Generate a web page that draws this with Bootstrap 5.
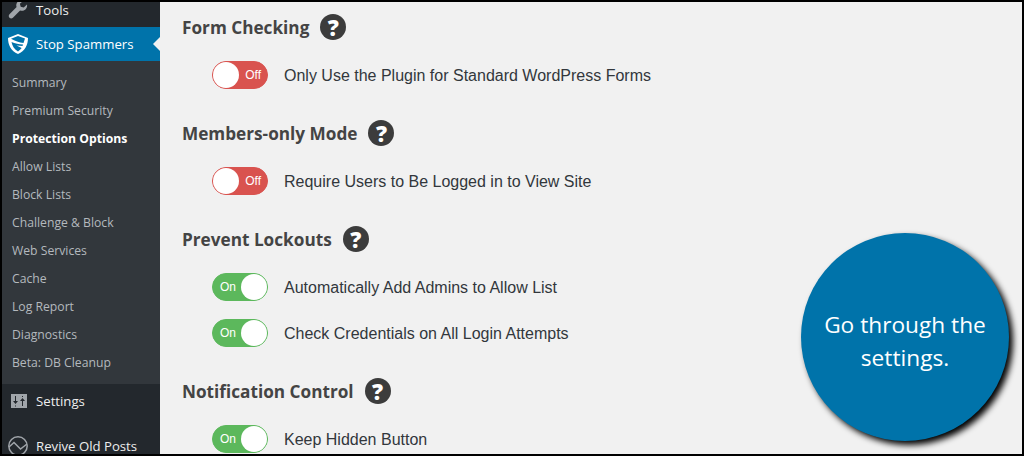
<!DOCTYPE html>
<html lang="en">
  <head>
    <meta charset="UTF-8" />
    <title>Stop Spammers</title>
    <link rel="stylesheet" href="https://cdn.jsdelivr.net/npm/bootstrap@5.3.0/dist/css/bootstrap.min.css" />
    <style>
      html, body { height: 456px; overflow: hidden; background: #000; }
      .frame { height: 452px; margin: 2px; position: relative; overflow: hidden; background: #f1f1f1; }
      .side { width: 158px; background: #23282d; font-family: "Open Sans", sans-serif; color: #eee; flex: none; }
      .side-inner { margin-top: -9px; }
      .menu-row { height: 34px; font-size: 13.2px; line-height: 14px; padding-left: 6px; gap: 8px; }
      .menu-row svg { width: 20px; height: 20px; flex: none; }
      .menu-now { background: #0073aa; color: #fff; position: relative; }
      .menu-now::after { content: ""; position: absolute; right: 0; top: 10px; border: 7px solid transparent; border-right-color: #f1f1f1; border-left: 0; }
      .menu-apart { margin-top: 11px; }
      .submenu { background: #32373c; padding: 8px 0 7px; }
      .sub-row { height: 28px; line-height: 28px; font-size: 12.2px; padding-left: 10px; color: #b4b9be; }
      .sub-on { color: #fff; font-weight: 700; }
      .pane { padding: 0 0 0 22px; font-family: "Liberation Sans", sans-serif; color: #32373c; }
      .head-row { height: 50px; gap: 11px; }
      .head-row h3 { font: 700 17.2px "Open Sans", sans-serif; color: #444; margin: 0; }
      .help-dot { width: 26px; height: 26px; border-radius: 50%; background: #3c3c3c; color: #fff; font: 800 22px/26px "Open Sans", sans-serif; text-align: center; }
      .opt-row { height: 46px; gap: 16px; font-size: 16px; padding-left: 30px; }
      .opt-text { padding-top: 2px; }
      .switch { width: 56px; height: 28px; border-radius: 14px; font: 12px/26px "Liberation Sans", sans-serif; color: #fff; border: 1px solid; padding: 0 6px; flex: none; position: relative; }
      .switch::before { content: ""; position: absolute; top: 0; width: 26px; height: 26px; border-radius: 50%; background: #fff; }
      .sw-off { background: #d9534f; border-color: #d9534f; text-align: right; }
      .sw-off::before { left: 0; }
      .sw-on { background: #5cb85c; border-color: #5cb85c; text-align: left; padding-left: 7px; }
      .sw-on::before { right: 0; }
      .gap-a { height: 10px; }
      .bubble { position: absolute; left: 799px; top: 231px; width: 208px; height: 208px; padding-top: 7px; border-radius: 50%; background: #0073aa; color: #fff; font: 22.7px/33px "Open Sans", sans-serif; box-shadow: 4px 4px 6px #000; text-align: center; }
    </style>
  </head>
  <body>
    <div class="frame d-flex">
      <div class="side">
        <div class="side-inner">
          <div class="menu-row d-flex align-items-center">
            <svg viewBox="0 0 20 20"><path fill="#a0a5aa" d="M19 4.500l-3.300 3-3-.7-.8-3 3.300-3C12.700.100 10 .800 8.800 3c-.7 1.400-.7 2.800-.2 4L1.500 14.300c-1 1-1 2.500 0 3.400s2.400.9 3.400 0l7.200-7.300c1.300.5 2.800.5 4.100-.2C18.500 9 19.500 6.800 19 4.500z" /></svg>
            <span>Tools</span>
          </div>
          <div class="menu-row menu-now d-flex align-items-center">
            <svg viewBox="0 0 20 20"><path fill="#fff" d="M0 4l10-4 10 4c0 7-3 13-10 16C3 17 0 11 0 4zm3 .800C7 7 11 8.500 15.500 9L17 4.500 10 2zM3.500 8c.6 3.500 2.500 7 6.500 9.500 1.500-1 2.800-2.200 3.700-3.500L8.500 11.500l6 .5.500-1.500C11 10.300 7 9.500 3.500 8z" fill-rule="evenodd" /></svg>
            <span>Stop Spammers</span>
          </div>
          <div class="submenu">
            <div class="sub-row">Summary</div>
            <div class="sub-row">Premium Security</div>
            <div class="sub-row sub-on">Protection Options</div>
            <div class="sub-row">Allow Lists</div>
            <div class="sub-row">Block Lists</div>
            <div class="sub-row">Challenge &amp; Block</div>
            <div class="sub-row">Web Services</div>
            <div class="sub-row">Cache</div>
            <div class="sub-row">Log Report</div>
            <div class="sub-row">Diagnostics</div>
            <div class="sub-row">Beta: DB Cleanup</div>
          </div>
          <div class="menu-row d-flex align-items-center">
            <svg viewBox="0 0 20 20"><path fill="#a0a5aa" d="M3 3h16v14H3zM7 5v5H5l2.500 3L10 10H8V5zm0 9.500V15.500h1v-1zm7-9.500v1h1V5zm.5 2L12 10h2v5h1v-5h2z" fill-rule="evenodd" /></svg>
            <span>Settings</span>
          </div>
          <div class="menu-row menu-apart d-flex align-items-center">
            <svg viewBox="0 0 20 20" fill="none" stroke="#a0a5aa" stroke-width="1.500"><circle cx="10" cy="10" r="9.200" /><path d="M1 11l5-4.500 6.500 6.500L19 8" /></svg>
            <span>Revive Old Posts</span>
          </div>
        </div>
      </div>
      <div class="pane flex-grow-1">
        <div class="head-row d-flex align-items-center"><h3>Form Checking</h3><div class="help-dot">?</div></div>
        <div class="opt-row d-flex align-items-center"><div class="switch sw-off">Off</div><span class="opt-text">Only Use the Plugin for Standard WordPress Forms</span></div>
        <div class="gap-a"></div>
        <div class="head-row d-flex align-items-center"><h3>Members-only Mode</h3><div class="help-dot">?</div></div>
        <div class="opt-row d-flex align-items-center"><div class="switch sw-off">Off</div><span class="opt-text">Require Users to Be Logged in to View Site</span></div>
        <div class="gap-a"></div>
        <div class="head-row d-flex align-items-center"><h3>Prevent Lockouts</h3><div class="help-dot">?</div></div>
        <div class="opt-row d-flex align-items-center"><div class="switch sw-on">On</div><span class="opt-text">Automatically Add Admins to Allow List</span></div>
        <div class="opt-row d-flex align-items-center"><div class="switch sw-on">On</div><span class="opt-text">Check Credentials on All Login Attempts</span></div>
        <div class="gap-a"></div>
        <div class="head-row d-flex align-items-center"><h3>Notification Control</h3><div class="help-dot">?</div></div>
        <div class="opt-row d-flex align-items-center"><div class="switch sw-on">On</div><span class="opt-text">Keep Hidden Button</span></div>
      </div>
      <div class="bubble d-flex align-items-center justify-content-center"><span>Go through the<br />settings.</span></div>
    </div>
    <script src="https://cdn.jsdelivr.net/npm/bootstrap@5.3.0/dist/js/bootstrap.bundle.min.js"></script>
  </body>
</html>
